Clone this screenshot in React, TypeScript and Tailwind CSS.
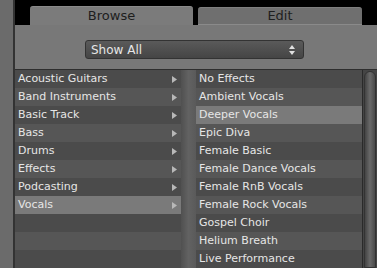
const categories = [
  "Acoustic Guitars",
  "Band Instruments",
  "Basic Track",
  "Bass",
  "Drums",
  "Effects",
  "Podcasting",
  "Vocals",
];

const presets = [
  "No Effects",
  "Ambient Vocals",
  "Deeper Vocals",
  "Epic Diva",
  "Female Basic",
  "Female Dance Vocals",
  "Female RnB Vocals",
  "Female Rock Vocals",
  "Gospel Choir",
  "Helium Breath",
  "Live Performance",
];

function Tabs() {
  return (
    <div className="flex items-end h-[25px] bg-black pl-[15px]">
      <div className="w-[163px] h-[19px] bg-[#7b7b7b] rounded-t-[3px] border-t border-[#8a8a8a] flex items-center justify-center text-[13px] text-[#1e1e1e]">
        Browse
      </div>
      <div className="ml-[5px] w-[164px] h-[18px] bg-[#6f6f6f] rounded-t-[3px] border-t border-[#7e7e7e] border-b border-b-[#8a8a8a] flex items-center justify-center text-[13px] text-[#1e1e1e]">
        Edit
      </div>
    </div>
  );
}

function ShowAll() {
  return (
    <div className="h-[45px] bg-[#787878] border-b border-[#2e2e2e] flex items-start pt-[15px] pl-[70px]">
      <div className="w-[219px] h-[19px] rounded-[3px] border border-[#333] bg-gradient-to-b from-[#5a5a5a] to-[#454545] flex items-center justify-between pl-[5px] pr-[8px] text-[12px] text-[#e6e6e6]">
        <span>Show All</span>
        <svg width="6" height="10" viewBox="0 0 6 10">
          <path d="M3 0 L6 4 L0 4 Z" fill="#e0e0e0" />
          <path d="M3 10 L6 6 L0 6 Z" fill="#e0e0e0" />
        </svg>
      </div>
    </div>
  );
}

function Row({ label, i, selected, arrow }: { label: string; i: number; selected?: boolean; arrow?: boolean }) {
  const bg = selected ? "bg-[#7a7a7a]" : i % 2 === 0 ? "bg-[#4b4b4b]" : "bg-[#565656]";
  return (
    <div className={`h-[18px] flex items-center justify-between pl-[3px] pr-[4px] text-[11px] text-[#e6e6e6] ${bg}`}>
      <span>{label}</span>
      {arrow && (
        <svg width="5" height="7" viewBox="0 0 5 7">
          <path d="M0 0 L5 3.5 L0 7 Z" fill="#b8b8b8" />
        </svg>
      )}
    </div>
  );
}

function Lists() {
  return (
    <div className="flex flex-1 bg-[#5c5c5c]">
      <div className="w-[166px] flex flex-col">
        {Array.from({ length: 11 }).map((_, i) =>
          i < categories.length ? (
            <Row key={i} label={categories[i]} i={i} selected={i === 7} arrow />
          ) : (
            <Row key={i} label="" i={i} />
          )
        )}
      </div>
      <div className="w-[15px] bg-gradient-to-r from-[#505050] via-[#626262] to-[#5a5a5a]" />
      <div className="w-[166px] flex flex-col">
        {presets.map((p, i) => (
          <Row key={p} label={p} i={i} selected={i === 2} />
        ))}
      </div>
      <div className="w-[15px] bg-[#454545] border-l border-[#2a2a2a] pt-[1px] flex justify-center">
        <div className="w-[12px] h-full rounded-t-full border border-[#333] bg-gradient-to-r from-[#444] via-[#6a6a6a] to-[#4a4a4a]" />
      </div>
    </div>
  );
}

export default function App() {
  return (
    <div className="w-[377px] h-[268px] flex overflow-hidden" style={{ fontFamily: '"DejaVu Sans", sans-serif' }}>
      <div className="w-[15px] shrink-0 bg-[#6b6b6b] border-r-2 border-[#333]" />
      <div className="w-[362px] shrink-0 flex flex-col">
        <Tabs />
        <ShowAll />
        <Lists />
      </div>
    </div>
  );
}
